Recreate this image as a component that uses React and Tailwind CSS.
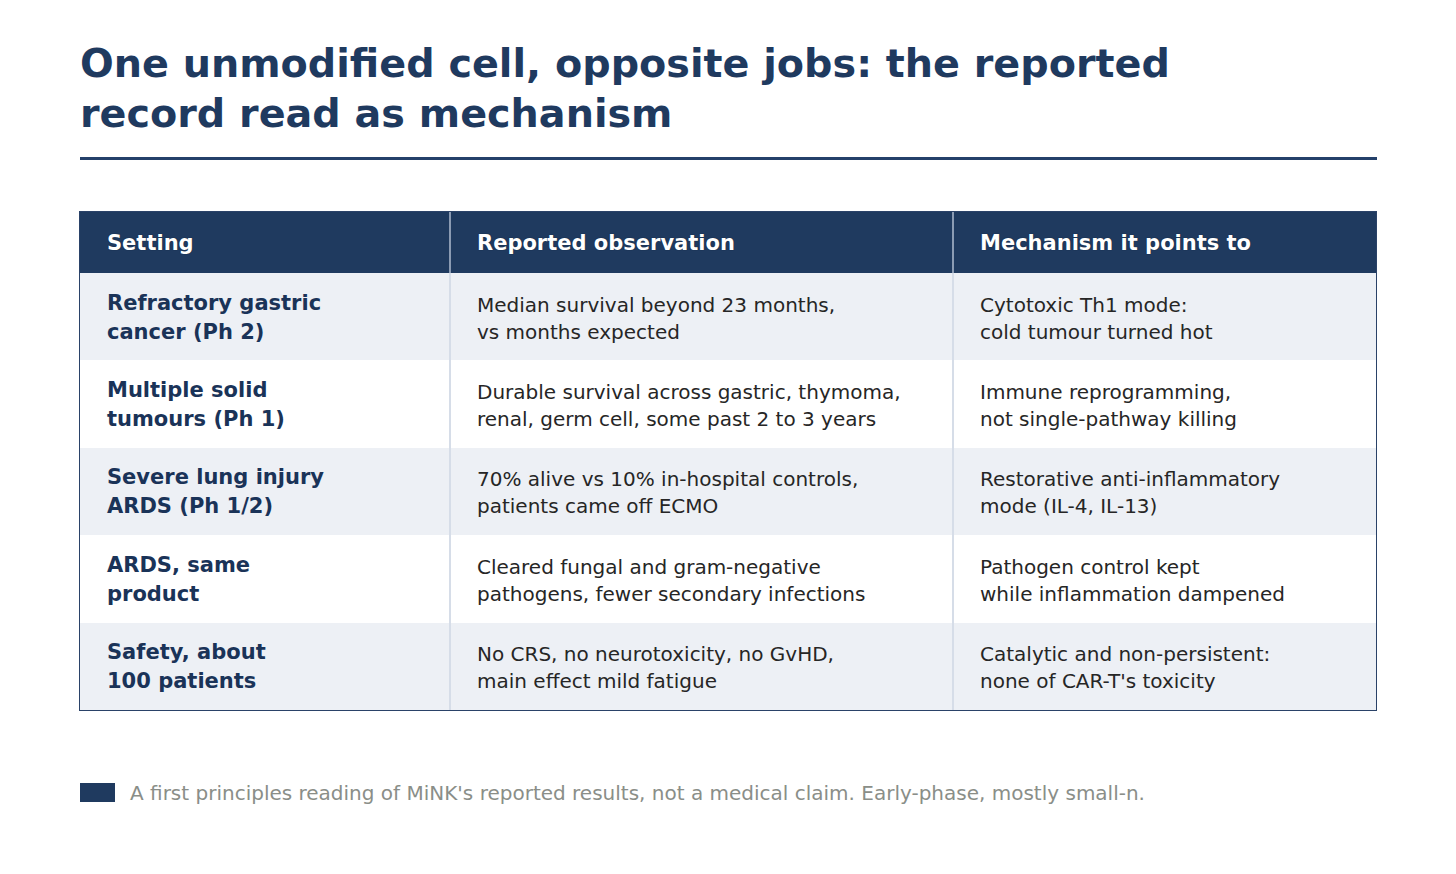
const rows = [
  {
    setting: ["Refractory gastric", "cancer (Ph 2)"],
    observation: ["Median survival beyond 23 months,", "vs months expected"],
    mechanism: ["Cytotoxic Th1 mode:", "cold tumour turned hot"],
  },
  {
    setting: ["Multiple solid", "tumours (Ph 1)"],
    observation: ["Durable survival across gastric, thymoma,", "renal, germ cell, some past 2 to 3 years"],
    mechanism: ["Immune reprogramming,", "not single-pathway killing"],
  },
  {
    setting: ["Severe lung injury", "ARDS (Ph 1/2)"],
    observation: ["70% alive vs 10% in-hospital controls,", "patients came off ECMO"],
    mechanism: ["Restorative anti-inflammatory", "mode (IL-4, IL-13)"],
  },
  {
    setting: ["ARDS, same", "product"],
    observation: ["Cleared fungal and gram-negative", "pathogens, fewer secondary infections"],
    mechanism: ["Pathogen control kept", "while inflammation dampened"],
  },
  {
    setting: ["Safety, about", "100 patients"],
    observation: ["No CRS, no neurotoxicity, no GvHD,", "main effect mild fatigue"],
    mechanism: ["Catalytic and non-persistent:", "none of CAR-T's toxicity"],
  },
];

function Lines({ lines }) {
  return lines.map((l, i) => <div key={i}>{l}</div>);
}

export default function App() {
  return (
    <div className="min-h-screen bg-white px-[80px] pt-[38px] font-['DejaVu_Sans',sans-serif]">
      <h1 className="text-[39.7px] leading-[50px] font-bold text-[#1f3a5f] w-[1200px]">
        One unmodified cell, opposite jobs: the reported record read as mechanism
      </h1>
      <div className="mt-[19px] h-[3px] w-[1297px] bg-[#24406a]" />

      <div className="mt-[51px] -ml-px w-[1298px] border border-[#2a4268]">
        <div className="grid grid-cols-[371px_503px_1fr] bg-[#1f3a5f] text-white font-bold text-[21px] h-[61px] items-center [text-shadow:0_0_1px_#0b1a30]">
          <div className="pl-[27px] pt-[3px] h-full flex items-center border-r-2 border-[#8b9bb3]">Setting</div>
          <div className="pl-[26px] pt-[3px] h-full flex items-center border-r-2 border-[#8b9bb3]">Reported observation</div>
          <div className="pl-[26px] pt-[3px] h-full flex items-center">Mechanism it points to</div>
        </div>
        {rows.map((r, i) => (
          <div
            key={i}
            className={
              "grid grid-cols-[371px_503px_1fr] h-[87.4px] " +
              (i % 2 === 0 ? "bg-[#edf0f5]" : "bg-white")
            }
          >
            <div className="pl-[27px] pt-[2px] flex flex-col justify-center text-[21px] leading-[29px] font-bold text-[#1a3358] border-r-2 border-[#d6dde8]">
              <Lines lines={r.setting} />
            </div>
            <div className="pl-[26px] pt-[4px] flex flex-col justify-center text-[20px] leading-[27px] text-[#262626] border-r-2 border-[#d6dde8]">
              <Lines lines={r.observation} />
            </div>
            <div className="pl-[26px] pt-[4px] flex flex-col justify-center text-[20px] leading-[27px] text-[#262626]">
              <Lines lines={r.mechanism} />
            </div>
          </div>
        ))}
      </div>

      <div className="mt-[67px] flex items-center gap-[15px]">
        <div className="w-[35px] h-[19px] bg-[#1f3a5f]" />
        <div className="text-[20px] text-[#8a8e88]">
          A first principles reading of MiNK's reported results, not a medical claim. Early-phase, mostly small-n.
        </div>
      </div>
    </div>
  );
}
